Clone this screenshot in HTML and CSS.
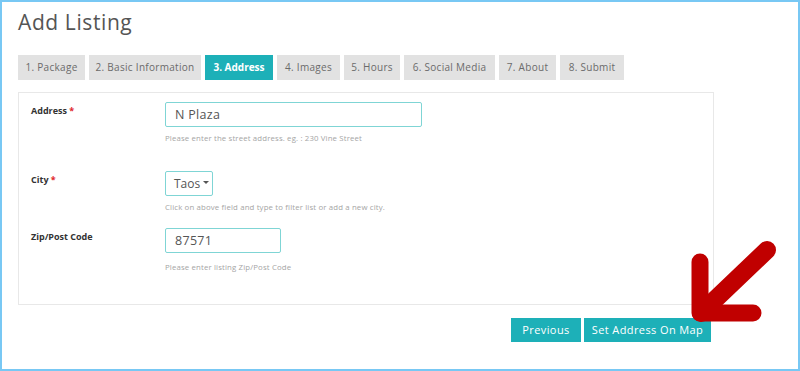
FILE: index.html
```html
<!DOCTYPE html>
<html>
<head>
<meta charset="utf-8">
<link rel="stylesheet" href="styles.css">
</head>
<body>
<div class="frame">
  <h1 class="title">Add Listing</h1>
  <div class="tabs">
    <div class="tab t1">1. Package</div>
    <div class="tab t2">2. Basic Information</div>
    <div class="tab t3 active">3. Address</div>
    <div class="tab t4">4. Images</div>
    <div class="tab t5">5. Hours</div>
    <div class="tab t6">6. Social Media</div>
    <div class="tab t7">7. About</div>
    <div class="tab t8">8. Submit</div>
  </div>
  <div class="panel">
    <div class="row row-address">
      <div class="label">Address <span class="req">*</span></div>
      <div class="field">
        <div class="input input-address">N Plaza</div>
        <div class="help">Please enter the street address. eg. : 230 Vine Street</div>
      </div>
    </div>
    <div class="row row-city">
      <div class="label">City <span class="req">*</span></div>
      <div class="field">
        <div class="input input-city"><span>Taos</span><span class="caret"></span></div>
        <div class="help">Click on above field and type to filter list or add a new city.</div>
      </div>
    </div>
    <div class="row row-zip">
      <div class="label">Zip/Post Code</div>
      <div class="field">
        <div class="input input-zip">87571</div>
        <div class="help">Please enter listing Zip/Post Code</div>
      </div>
    </div>
  </div>
  <div class="actions">
    <div class="btn btn-prev">Previous</div>
    <div class="btn btn-map">Set Address On Map</div>
  </div>
  <svg class="arrow" width="110" height="105" viewBox="680 230 110 105">
    <path d="M767 250 L701 313" fill="none" stroke="#c00000" stroke-width="18" stroke-linecap="round"/>
    <path d="M700 262 L700 313 L753 313" fill="none" stroke="#c00000" stroke-width="17" stroke-linecap="round" stroke-linejoin="round"/>
  </svg>
</div>
</body>
</html>
```

FILE: styles.css
```css
html, body {
  margin: 0;
  padding: 0;
  background: #fff;
}
.frame {
  position: relative;
  box-sizing: border-box;
  width: 800px;
  height: 371px;
  border: 2px solid #78c8f4;
  padding: 0 0 0 16px;
  font-family: "Open Sans", "Noto Sans", sans-serif;
  color: #555;
}
.title {
  margin: 0;
  padding-top: 7px;
  height: 53px;
  box-sizing: border-box;
  font-size: 21px;
  font-weight: 400;
  line-height: 26px;
  color: #555;
  letter-spacing: 0.6px;
}
.tabs {
  display: flex;
  gap: 4px;
  height: 25px;
}
.tab {
  background: #e2e2e2;
  color: #6b6b6b;
  font-size: 10px;
  letter-spacing: 0.3px;
  line-height: 25px;
  text-align: center;
  box-sizing: border-box;
}
.t1 { width: 67px; }
.t2 { width: 112px; }
.t3 { width: 68px; }
.t4 { width: 63px; }
.t5 { width: 56px; }
.t6 { width: 91px; }
.t7 { width: 57px; }
.t8 { width: 64px; }
.tab.active {
  background: #1db0b8;
  color: #fff;
  font-weight: 700;
  letter-spacing: 0;
}
.panel {
  margin-top: 12px;
  width: 696px;
  height: 213px;
  box-sizing: border-box;
  border: 1px solid #e8e8e8;
  padding: 9px 0 0 12px;
}
.row {
  display: flex;
}
.row-address { height: 69px; }
.row-city { height: 57px; }
.label {
  width: 134px;
  padding-top: 3px;
  font-size: 9px;
  font-weight: 700;
  color: #333;
  line-height: 12px;
}
.req {
  color: #e0262b;
}
.input {
  box-sizing: border-box;
  height: 25px;
  border: 1px solid #7fd5d5;
  border-radius: 2px;
  font-size: 12.5px;
  letter-spacing: 0.3px;
  line-height: 23px;
  color: #555;
  padding-left: 9px;
  white-space: nowrap;
}
.input-address { width: 257px; }
.input-city {
  width: 48px;
  padding-left: 8px;
  display: flex;
  align-items: center;
  gap: 3px;
  letter-spacing: 0;
  font-size: 12px;
}
.input-zip { width: 116px; }
.caret {
  display: block;
  width: 0;
  height: 0;
  border-left: 3px solid transparent;
  border-right: 3px solid transparent;
  border-top: 3px solid #555;
  margin-top: -2px;
}
.help {
  margin-top: 6px;
  font-size: 7.8px;
  letter-spacing: 0.15px;
  line-height: 10px;
  color: #a5a5a5;
}
.row-zip .help { margin-top: 9px; }
.actions {
  width: 693px;
  margin-top: 13px;
  display: flex;
  justify-content: flex-end;
  gap: 3px;
}
.btn {
  height: 24px;
  line-height: 24px;
  background: #1db0b8;
  color: #fff;
  font-size: 11px;
  letter-spacing: 0.4px;
  text-align: center;
}
.btn-prev { width: 70px; }
.btn-map { width: 127px; }
.arrow {
  position: absolute;
  left: 678px;
  top: 228px;
}
```
